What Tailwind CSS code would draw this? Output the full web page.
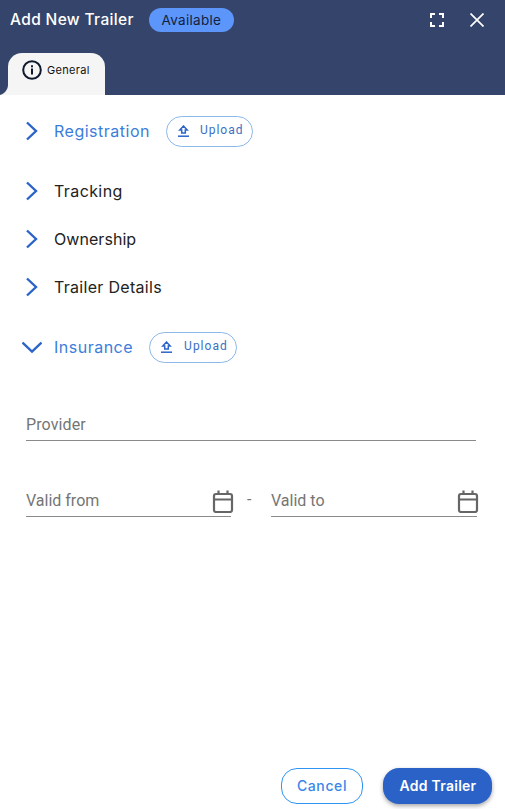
<!DOCTYPE html>
<html lang="en">
<head>
  <meta charset="UTF-8" />
  <meta name="viewport" content="width=device-width, initial-scale=1" />
  <title>Add New Trailer</title>
  <script src="https://cdn.jsdelivr.net/npm/@tailwindcss/browser@4"></script>
</head>
<body class="bg-white font-['Inter',sans-serif]">
  <div class="flex h-[809px] w-[505px] flex-col overflow-hidden">

    <!-- header -->
    <header class="h-[95px] shrink-0 bg-[#35446a]">
      <div class="flex h-[40px] items-center pl-[10px] pr-[21px]">
        <h1 class="text-[15.5px] font-medium tracking-[0.35px] text-white">Add New Trailer</h1>
        <span class="ml-[15px] flex h-[24px] w-[85px] items-center justify-center rounded-full bg-[#5c96fb] text-[13.5px] tracking-[0.3px] text-[#14213d]">Available</span>
        <div class="ml-auto flex items-center gap-[26px]">
          <svg class="h-[14px] w-[14px]" viewBox="0 0 14 14" fill="none" stroke="#fff" stroke-width="2"><path d="M1 5V1h4M9 1h4v4M13 9v4H9M5 13H1V9"/></svg>
          <svg class="h-[14px] w-[14px]" viewBox="0 0 14 14" fill="none" stroke="#fff" stroke-width="1.7"><path d="M0.5 0.500l13 13M13.500 0.500l-13 13"/></svg>
        </div>
      </div>
      <div class="relative ml-[8px] mt-[13px] flex h-[42px] w-[97px] items-start gap-[5px] rounded-t-[14px] bg-[#f5f5f5] pl-[14px] pt-[7px]">
        <svg class="h-[20px] w-[20px]" viewBox="0 0 20 20" fill="none"><circle cx="10" cy="10" r="8.800" stroke="#0f1a2e" stroke-width="2"/><rect x="9" y="8.500" width="2" height="6" fill="#0f1a2e"/><rect x="9" y="5.300" width="2" height="2" fill="#0f1a2e"/></svg>
        <span class="text-[11px] leading-[20px] tracking-[0.3px] text-[#111]">General</span>
        <svg class="absolute bottom-0 left-[-8px] h-[10px] w-[8px]" viewBox="0 0 8 10"><path d="M8 0v10H0c4-1 8-5 8-10z" fill="#f5f5f5"/></svg>
      </div>
    </header>

    <main class="flex-1 pl-[22px]">
      <div class="flex h-[72px] items-center">
        <svg class="h-[20px] w-[20px]" viewBox="0 0 20 20" fill="none" stroke="#2c64c8" stroke-width="2.400"><path d="M5 1.500l9 8.500-9 8.500"/></svg>
        <span class="ml-[12px] text-[16px] tracking-[0.5px] text-[#3b7ddb]">Registration</span>
        <button class="ml-[16px] flex h-[31px] w-[87px] items-center gap-[11px] rounded-full border border-[#8cb8ea] pl-[11px] font-['Roboto',sans-serif] text-[12px] tracking-[1px] text-[#3a6fc4]">
          <svg class="h-[12px] w-[11px]" viewBox="0 0 11 12" fill="none" stroke="#2c64c8" stroke-width="1.500"><path d="M5.500 1L9.200 5H7.300v3H3.700V5H1.800z"/><path d="M0 11.200h11"/></svg>
          <span class="mt-[-3px]">Upload</span>
        </button>
      </div>
      <div class="flex h-[48px] items-center">
        <svg class="h-[20px] w-[20px]" viewBox="0 0 20 20" fill="none" stroke="#2c64c8" stroke-width="2.400"><path d="M5 1.500l9 8.500-9 8.500"/></svg>
        <span class="ml-[12px] text-[16px] tracking-[0.4px] text-[#222]">Tracking</span>
      </div>
      <div class="flex h-[48px] items-center">
        <svg class="h-[20px] w-[20px]" viewBox="0 0 20 20" fill="none" stroke="#2c64c8" stroke-width="2.400"><path d="M5 1.500l9 8.500-9 8.500"/></svg>
        <span class="ml-[12px] text-[16px] tracking-[0.05px] text-[#222]">Ownership</span>
      </div>
      <div class="flex h-[48px] items-center">
        <svg class="h-[20px] w-[20px]" viewBox="0 0 20 20" fill="none" stroke="#2c64c8" stroke-width="2.400"><path d="M5 1.500l9 8.500-9 8.500"/></svg>
        <span class="ml-[12px] text-[16px] tracking-[0.3px] text-[#222]">Trailer Details</span>
      </div>
      <div class="flex h-[72px] items-center">
        <svg class="h-[20px] w-[20px]" viewBox="0 0 20 20" fill="none" stroke="#2c64c8" stroke-width="2.400"><path d="M0.500 5.500l9.500 9 9.500-9"/></svg>
        <span class="ml-[12px] text-[16px] tracking-[0.5px] text-[#3b7ddb]">Insurance</span>
        <button class="ml-[16px] flex h-[31px] w-[88px] items-center gap-[12px] rounded-full border border-[#8cb8ea] pl-[11px] font-['Roboto',sans-serif] text-[12px] tracking-[1px] text-[#3a6fc4]">
          <svg class="h-[12px] w-[11px]" viewBox="0 0 11 12" fill="none" stroke="#2c64c8" stroke-width="1.500"><path d="M5.500 1L9.200 5H7.300v3H3.700V5H1.800z"/><path d="M0 11.200h11"/></svg>
          <span class="mt-[-3px]">Upload</span>
        </button>
      </div>

      <!-- insurance form -->
      <div class="ml-[4px] mt-[27px] w-[450px] border-b border-[#8a8a8a] font-['Roboto',sans-serif] text-[16px] leading-[30px] tracking-[0.12px] text-[#757575]">Provider</div>
      <div class="ml-[4px] mt-[44px] flex w-[451px] items-start font-['Roboto',sans-serif] text-[16px] text-[#757575]">
        <div class="flex h-[32px] w-[205px] items-center justify-between border-b border-[#8a8a8a]">
          <span>Valid from</span>
          <svg class="mr-[-4px] h-[24px] w-[24px]" viewBox="0 0 24 24" fill="none" stroke="#666" stroke-width="2.200"><rect x="3" y="5" width="18" height="18" rx="2"/><path d="M3 10.500h18M7.500 1.500v3.500M16.500 1.500v3.500"/></svg>
        </div>
        <span class="mx-[16px] mt-[3px] w-[8px]">-</span>
        <div class="flex h-[32px] w-[206px] items-center justify-between border-b border-[#8a8a8a]">
          <span>Valid to</span>
          <svg class="mr-[-3px] h-[24px] w-[24px]" viewBox="0 0 24 24" fill="none" stroke="#666" stroke-width="2.200"><rect x="3" y="5" width="18" height="18" rx="2"/><path d="M3 10.500h18M7.500 1.500v3.500M16.500 1.500v3.500"/></svg>
        </div>
      </div>
    </main>

    <footer class="flex justify-end gap-[20px] pb-[5px] pr-[13px]">
      <button class="h-[36px] w-[82px] rounded-[16px] border border-[#2f95f2] pb-[2px] text-[14px] font-medium tracking-[0.6px] text-[#3b86ea]">Cancel</button>
      <button class="h-[36px] w-[109px] rounded-[16px] bg-[#2b62c8] pb-[1px] pl-[1px] text-[14px] font-semibold tracking-[0.25px] text-white shadow-[0_2px_4px_rgba(0,0,0,0.35)]">Add Trailer</button>
    </footer>
  </div>
</body>
</html>
